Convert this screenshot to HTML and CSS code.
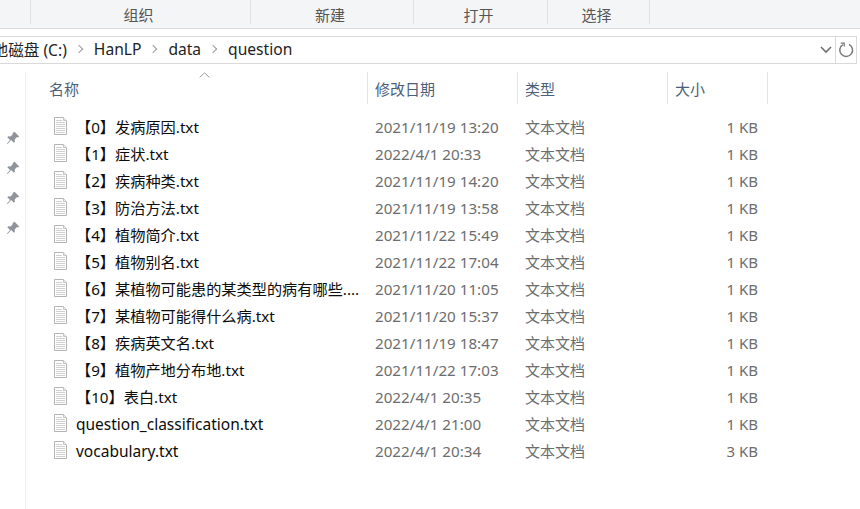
FILE: index.html
```html
<!DOCTYPE html>
<html lang="zh-CN">
<head>
<meta charset="utf-8">
<title>question</title>
<link rel="stylesheet" href="styles.css">
</head>
<body>
<svg class="defs" width="0" height="0" aria-hidden="true">
  <symbol id="doc" viewBox="0 0 13 18">
    <path d="M.5.5h9l3 3v14H.5z" fill="#fff" stroke="#b4b4b4"/>
    <path d="M9.500.5v3h3" fill="#eee" stroke="#c4c4c4"/>
    <path d="M2 3.500h6M2 5.500h9M2 7.500h9M2 9.500h9M2 11.500h9M2 13.500h9M2 15.500h9" stroke="#d0d0d0"/>
  </symbol>
  <symbol id="pin" viewBox="0 0 14 14">
    <path d="M8.600.8l4.600 4.600-1.200 1-1-.3-2.300 2.300.2 2.300-1 1-2.800-2.800L1.600 13l-.6-.6 3-3.500L1.300 6.200l1-1 2.300.2 2.300-2.300-.3-1z" fill="#8f959b"/>
  </symbol>
</svg>
<header class="ribbon">
  <div class="ribbon-lead"></div>
  <div class="tab tab-org">组织</div>
  <div class="tab tab-new">新建</div>
  <div class="tab tab-open">打开</div>
  <div class="tab tab-sel">选择</div>
</header>
<nav class="address">
  <div class="crumbs">
    <span class="crumb-first">本地磁盘 (C:)</span><i class="chev"></i>
    <span>HanLP</span><i class="chev"></i>
    <span>data</span><i class="chev"></i>
    <span>question</span>
  </div>
  <svg class="drop" width="12" height="8" viewBox="0 0 12 8"><path d="M1 1l5 5 5-5" fill="none" stroke="#6f6f6f" stroke-width="1.600"/></svg>
  <div class="refresh">
    <svg width="16" height="16" viewBox="0 0 16 16"><path d="M4.800 2.600A6.400 6.400 0 1 0 11 2.300" fill="none" stroke="#7a7a7a" stroke-width="1.500"/><path d="M2.800 1.200h3.400v3.400" fill="none" stroke="#7a7a7a" stroke-width="1.300"/></svg>
  </div>
</nav>
<main class="pane">
  <aside class="pins">
    <svg class="pin" width="14" height="14"><use href="#pin"/></svg>
    <svg class="pin" width="14" height="14"><use href="#pin"/></svg>
    <svg class="pin" width="14" height="14"><use href="#pin"/></svg>
    <svg class="pin" width="14" height="14"><use href="#pin"/></svg>
  </aside>
  <section class="list">
    <div class="head">
      <div class="h h-name">名称<svg class="sort" width="11" height="6" viewBox="0 0 11 6"><path d="M.7 5.300L5.500.8l4.800 4.500" fill="none" stroke="#9a9a9a"/></svg></div>
      <div class="h">修改日期</div>
      <div class="h">类型</div>
      <div class="h">大小</div>
    </div>
    <div class="row"><span class="name"><svg class="doc"><use href="#doc"/></svg><span class="lb">【0】发病原因.txt</span></span><span class="date">2021/11/19 13:20</span><span class="type">文本文档</span><span class="size">1 KB</span></div>
    <div class="row"><span class="name"><svg class="doc"><use href="#doc"/></svg><span class="lb">【1】症状.txt</span></span><span class="date">2022/4/1 20:33</span><span class="type">文本文档</span><span class="size">1 KB</span></div>
    <div class="row"><span class="name"><svg class="doc"><use href="#doc"/></svg><span class="lb">【2】疾病种类.txt</span></span><span class="date">2021/11/19 14:20</span><span class="type">文本文档</span><span class="size">1 KB</span></div>
    <div class="row"><span class="name"><svg class="doc"><use href="#doc"/></svg><span class="lb">【3】防治方法.txt</span></span><span class="date">2021/11/19 13:58</span><span class="type">文本文档</span><span class="size">1 KB</span></div>
    <div class="row"><span class="name"><svg class="doc"><use href="#doc"/></svg><span class="lb">【4】植物简介.txt</span></span><span class="date">2021/11/22 15:49</span><span class="type">文本文档</span><span class="size">1 KB</span></div>
    <div class="row"><span class="name"><svg class="doc"><use href="#doc"/></svg><span class="lb">【5】植物别名.txt</span></span><span class="date">2021/11/22 17:04</span><span class="type">文本文档</span><span class="size">1 KB</span></div>
    <div class="row"><span class="name"><svg class="doc"><use href="#doc"/></svg><span class="lb">【6】某植物可能患的某类型的病有哪些....</span></span><span class="date">2021/11/20 11:05</span><span class="type">文本文档</span><span class="size">1 KB</span></div>
    <div class="row"><span class="name"><svg class="doc"><use href="#doc"/></svg><span class="lb">【7】某植物可能得什么病.txt</span></span><span class="date">2021/11/20 15:37</span><span class="type">文本文档</span><span class="size">1 KB</span></div>
    <div class="row"><span class="name"><svg class="doc"><use href="#doc"/></svg><span class="lb">【8】疾病英文名.txt</span></span><span class="date">2021/11/19 18:47</span><span class="type">文本文档</span><span class="size">1 KB</span></div>
    <div class="row"><span class="name"><svg class="doc"><use href="#doc"/></svg><span class="lb">【9】植物产地分布地.txt</span></span><span class="date">2021/11/22 17:03</span><span class="type">文本文档</span><span class="size">1 KB</span></div>
    <div class="row"><span class="name"><svg class="doc"><use href="#doc"/></svg><span class="lb">【10】表白.txt</span></span><span class="date">2022/4/1 20:35</span><span class="type">文本文档</span><span class="size">1 KB</span></div>
    <div class="row"><span class="name"><svg class="doc"><use href="#doc"/></svg><span class="lb lat">question_classification.txt</span></span><span class="date">2022/4/1 21:00</span><span class="type">文本文档</span><span class="size">1 KB</span></div>
    <div class="row"><span class="name"><svg class="doc"><use href="#doc"/></svg><span class="lb lat">vocabulary.txt</span></span><span class="date">2022/4/1 20:34</span><span class="type">文本文档</span><span class="size">3 KB</span></div>
  </section>
</main>
</body>
</html>
```

FILE: styles.css
```css
* { box-sizing: border-box; }
html, body { margin: 0; height: 509px; overflow: hidden; background: #fff; }
body {
  font-family: "Noto Sans", "Noto Sans CJK SC", sans-serif;
  font-size: 15px;
  color: #1a1a1a;
}
.defs { position: absolute; }

.ribbon {
  display: flex;
  height: 29px;
  padding-bottom: 4px;
  background: #f4f5f7;
  border-bottom: 1px solid #dcdcdc;
  color: #555;
}
.ribbon-lead { width: 31px; border-right: 1px solid #dfe0e2; }
.tab {
  display: flex;
  align-items: center;
  justify-content: center;
  border-right: 1px solid #dfe0e2;
  padding: 4px 4px 0 0;
}
.tab-org { width: 220px; }
.tab-new { width: 163px; }
.tab-open { width: 134px; }
.tab-sel { width: 102px; }

.address {
  display: flex;
  align-items: center;
  width: 857px;
  height: 28px;
  margin-top: 7px;
  border: 1px solid #d9d9d9;
  border-left: 0;
  overflow: hidden;
}
.crumbs {
  flex: 1;
  display: flex;
  align-items: center;
  margin: -2px 0 0 -23px;
  font-size: 15.6px;
  white-space: nowrap;
  color: #222;
}
.chev {
  width: 6px;
  height: 6px;
  margin: 0 12px 0 9px;
  border-top: 1.500px solid #9b9b9b;
  border-right: 1.500px solid #9b9b9b;
  transform: rotate(45deg);
}
.drop { margin-right: 3px; }
.refresh {
  display: flex;
  align-items: center;
  justify-content: center;
  width: 21px;
  height: 100%;
  border-left: 1px solid #d9d9d9;
}

.pane { display: flex; height: 445px; margin-top: 8px; }
.pins {
  display: flex;
  flex-direction: column;
  gap: 16px;
  width: 26px;
  padding: 59px 0 0 6px;
  border-right: 1px solid #efefef;
}
.pin { display: block; }

.list { flex: 1; }
.head {
  display: grid;
  grid-template-columns: 342px 150px 150px 100px;
  height: 32px;
  margin-bottom: 9px;
  color: #4c607a;
}
.h {
  position: relative;
  display: flex;
  align-items: center;
  padding-left: 7px;
  border-right: 1px solid #e3e3e3;
}
.h-name { padding-left: 23px; }
.sort { position: absolute; left: 173px; top: 0; }

.row {
  display: grid;
  grid-template-columns: 342px 150px 150px 100px;
  align-items: center;
  height: 27px;
}
.name { display: flex; align-items: center; padding-left: 28px; white-space: nowrap; }
.doc { width: 13px; height: 18px; margin: -1px 9px 0 0; flex: none; }
.lb { color: #0c0c0c; font-size: 15.2px; padding-bottom: 2px; }
.lb.lat { font-size: 15.5px; padding-bottom: 0; }
.date, .type, .size { color: #6d6d6d; padding-left: 7px; }
.date { font-size: 15.2px; }
.size { padding: 0 10px 0 0; text-align: right; }
```
